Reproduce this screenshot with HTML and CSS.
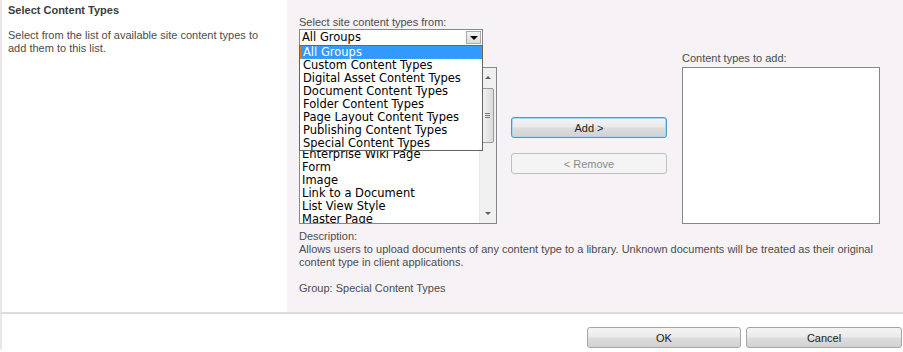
FILE: index.html
```html
<!DOCTYPE html>
<html>
<head>
    <title>Select Content Types</title>
    <link rel="stylesheet" href="styles.css">
</head>
<body>
    <div class="section">
        <div class="intro">
            <h3>Select Content Types</h3>
            <p>Select from the list of available site content types to add them to this list.</p>
        </div>

        <div class="panel">
            <label class="field-label">Select site content types from:</label>
            <div class="combo">
                <div class="combo-value">All Groups</div>
                <div class="combo-arrow"><span class="tri"></span></div>

                <ul class="dropdown">
                    <li class="selected">All Groups</li>
                    <li>Custom Content Types</li>
                    <li>Digital Asset Content Types</li>
                    <li>Document Content Types</li>
                    <li>Folder Content Types</li>
                    <li>Page Layout Content Types</li>
                    <li>Publishing Content Types</li>
                    <li>Special Content Types</li>
                </ul>
            </div>

            <div class="picker">
                <div class="col-list">
                    <label class="field-label">Available Site Content Types:</label>
                    <div class="listbox">
                        <ul class="items">
                            <li>Article Page</li>
                            <li>Audio</li>
                            <li>Basic Page</li>
                            <li>Document</li>
                            <li>Document Set</li>
                            <li>Dublin Core Columns</li>
                            <li>Enterprise Wiki Page</li>
                            <li>Form</li>
                            <li>Image</li>
                            <li>Link to a Document</li>
                            <li>List View Style</li>
                            <li>Master Page</li>
                        </ul>
                        <div class="scrollbar">
                            <div class="sb-up"></div>
                            <div class="sb-thumb"><span></span><span></span><span></span></div>
                            <div class="sb-down"></div>
                        </div>
                    </div>
                </div>

                <div class="col-buttons">
                    <button class="btn btn-focus">Add &gt;</button>
                    <button class="btn btn-disabled">&lt; Remove</button>
                </div>

                <div class="col-list col-right">
                    <label class="field-label">Content types to add:</label>
                    <div class="listbox listbox-empty"></div>
                </div>
            </div>

            <div class="description">
                <div>Description:</div>
                <div class="desc-text">Allows users to upload documents of any content type to a library. Unknown documents will be treated as their original content type in client applications.</div>
                <div class="group">Group: Special Content Types</div>
            </div>
        </div>
    </div>

    <div class="footer">
        <button class="btn btn-ok">OK</button>
        <button class="btn btn-cancel">Cancel</button>
    </div>
</body>
</html>
```

FILE: styles.css
```css
body {
    margin: 0;
    font-family: "Liberation Sans", Arial, sans-serif;
    font-size: 11px;
    color: #4c4c4c;
    background: white;
}

ul {
    list-style: none;
    margin: 0;
    padding: 0;
}

.section {
    display: flex;
    border-left: 2px solid #ece6ec;
    height: 312px;
}

.intro {
    width: 279px;
    padding: 3px 0 0 6px;
    background: white;
}

.intro h3 {
    margin: 0;
    font-size: 11px;
    font-weight: bold;
    color: #3c3c3c;
    line-height: 14px;
}

.intro p {
    margin: 12px 0 0;
    line-height: 13px;
    width: 262px;
}

.panel {
    flex: 1;
    background: #f6f2f6;
    padding: 16px 0 0 12px;
}

.field-label {
    display: block;
    line-height: 13px;
    color: #4c4c4c;
}

.combo {
    position: relative;
    width: 182px;
    height: 15px;
    border: 1px solid #828790;
    background: white;
    display: flex;
}

.combo-value {
    flex: 1;
    font-family: "DejaVu Sans", Verdana, sans-serif;
    font-size: 11.5px;
    color: black;
    padding-left: 2px;
    line-height: 15px;
}

.combo-arrow {
    width: 15px;
    height: 13px;
    margin: 1px 1px 0 0;
    border: 1px solid #a9a9a9;
    box-sizing: border-box;
    background: linear-gradient(#f2f2f2, #dcdcdc);
    display: flex;
    align-items: center;
    justify-content: center;
}

.tri {
    width: 0;
    height: 0;
    border-left: 4px solid transparent;
    border-right: 4px solid transparent;
    border-top: 4px solid black;
}

.dropdown {
    position: absolute;
    top: 15px;
    left: -1px;
    width: 182px;
    border: 1px solid #646464;
    background: white;
    z-index: 5;
    font-family: "DejaVu Sans", Verdana, sans-serif;
    font-size: 11.5px;
    color: black;
}

.dropdown li {
    height: 13px;
    line-height: 13px;
    padding-left: 3px;
    white-space: nowrap;
}

.dropdown li.selected {
    background: #3399ff;
    color: white;
    outline: 1px dotted #e08020;
    outline-offset: -1px;
}

.picker {
    display: flex;
    margin-top: 6px;
}

.col-list {
    width: 198px;
}

.col-list .field-label {
    margin-bottom: 2px;
}

.listbox {
    position: relative;
    height: 155px;
    border: 1px solid #828790;
    background: white;
    overflow: hidden;
}

.items {
    padding-top: 2px;
    font-family: "DejaVu Sans", Verdana, sans-serif;
    font-size: 11.5px;
    color: black;
}

.items li {
    height: 13px;
    line-height: 13px;
    padding-left: 2px;
    white-space: nowrap;
}

.scrollbar {
    position: absolute;
    top: 0;
    right: 0;
    bottom: 0;
    width: 16px;
    background: #f0f0f0;
    border-left: 1px solid #e8e8e8;
}

.sb-up, .sb-down {
    position: absolute;
    left: 5px;
    width: 0;
    height: 0;
    border-left: 3px solid transparent;
    border-right: 3px solid transparent;
}

.sb-up {
    top: 8px;
    border-bottom: 3px solid #606060;
}

.sb-down {
    bottom: 8px;
    border-top: 3px solid #606060;
}

.sb-thumb {
    position: absolute;
    top: 20px;
    left: 1px;
    width: 13px;
    height: 55px;
    border: 1px solid #9a9a9a;
    border-radius: 2px;
    box-sizing: border-box;
    background: linear-gradient(to right, #f4f4f4, #dadada);
    display: flex;
    flex-direction: column;
    align-items: center;
    justify-content: center;
    gap: 1px;
}

.sb-thumb span {
    width: 5px;
    height: 1px;
    background: #777;
}

.col-buttons {
    width: 156px;
    margin: 0 15px 0 14px;
    padding-top: 65px;
    display: flex;
    flex-direction: column;
    gap: 15px;
}

.btn {
    font-family: "Liberation Sans", Arial, sans-serif;
    font-size: 11px;
    height: 21px;
    border: 1px solid #a5a5a5;
    border-radius: 3px;
    background: linear-gradient(#f4f4f4 0%, #ebebeb 45%, #dcdcdc 55%, #d2d2d2 100%);
    color: #222;
    padding: 0;
}

.btn-focus {
    border-color: #3c9fdb;
    box-shadow: inset 0 0 0 1px #a8d8f5;
}

.btn-disabled {
    background: #f4f4f4;
    border-color: #c0c0c0;
    color: #8a8a8a;
}

.description {
    margin-top: 6px;
    line-height: 13px;
}

.desc-text {
    width: 580px;
}

.group {
    margin-top: 13px;
}

.footer {
    border-top: 2px solid #dcdcdc;
    border-left: 2px solid #ece6ec;
    height: 38px;
    display: flex;
    justify-content: flex-end;
    align-items: flex-start;
    gap: 5px;
    padding: 13px 1px 0 0;
    box-sizing: border-box;
}

.btn-ok {
    width: 154px;
}

.btn-cancel {
    width: 156px;
}
```
